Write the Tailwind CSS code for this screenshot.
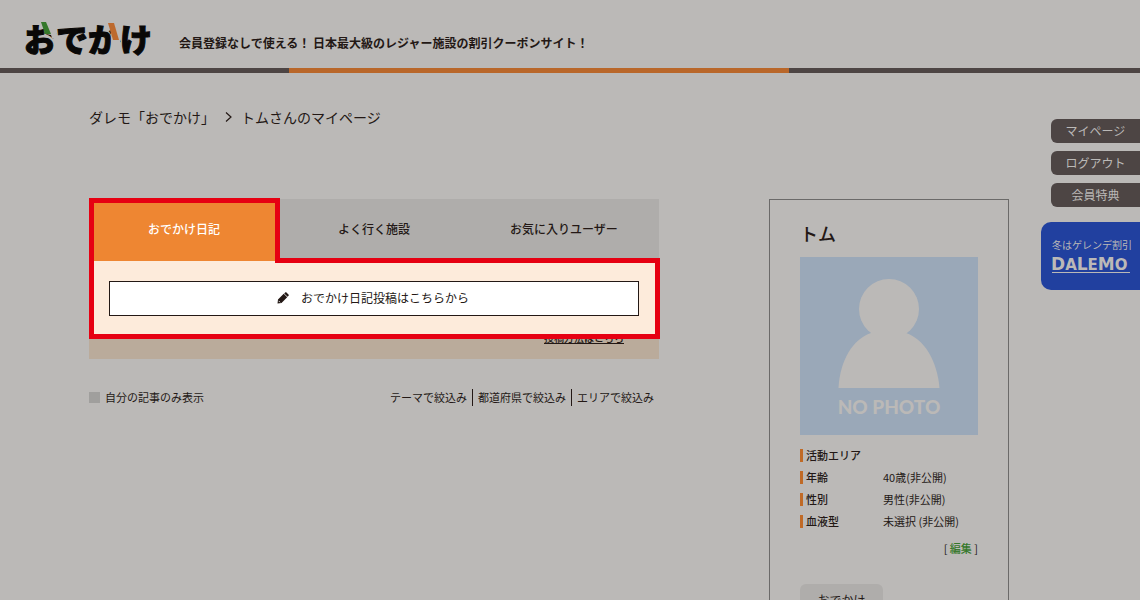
<!DOCTYPE html>
<html lang="ja">
<head>
<meta charset="utf-8">
<meta name="viewport" content="width=device-width, initial-scale=1">
<title>トムさんのマイページ | おでかけ</title>
<script src="https://cdn.jsdelivr.net/npm/@tailwindcss/browser@4"></script>
</head>
<body class="relative h-screen overflow-hidden bg-[#bbb9b7] font-['Noto_Sans_CJK_JP',sans-serif] text-[#231815]">
<header>
  <div class="flex h-[68px] items-start pl-[24px]">
    <a href="#" class="relative mt-[19px] block w-[128px] whitespace-nowrap text-[32px] leading-[38px] font-black text-[#090807] [-webkit-text-stroke:1px_#090807]">おでかけ
      <svg class="absolute top-0 left-0" width="128" height="38" viewBox="0 0 128 38" aria-hidden="true">
        <path d="M21 3h11v16h-4l-1-3-5-1z" fill="#bbb9b7"/>
        <path d="M17 3h5l5 12h-6z" fill="#35782a"/>
        <path d="M86 3h10v24h-8z" fill="#bbb9b7"/>
        <path d="M84 4h6l5 17h-6z" fill="#bd6a2e"/>
      </svg>
    </a>
    <p class="mt-[34px] ml-[27px] text-[12px] leading-[18px] font-bold">会員登録なしで使える！ 日本最大級のレジャー施設の割引クーポンサイト！</p>
  </div>
  <div class="flex h-[5px] bg-[#4d4544]">
    <div class="ml-[289px] w-[500px] bg-[#b9672a]"></div>
  </div>
</header>

<nav aria-label="パンくず" class="mt-[34px] ml-[89px] flex items-center text-[14px] leading-[20px]">
  <a href="#">ダレモ「おでかけ」</a>
  <svg class="mr-[8px] ml-[9px]" width="9" height="12" viewBox="0 0 9 12" fill="none" stroke="#231815" stroke-width="1.2" aria-hidden="true"><path d="M2 1.5l5 4.5-5 4.5"/></svg>
  <span>トムさんのマイページ</span>
</nav>

<main class="mt-[72px] ml-[89px] flex max-w-[920px] items-start gap-[110px]">
  <div class="flex-1">
    <section class="relative">
      <div class="grid grid-cols-3 bg-[#afadab] text-[12px] font-medium">
        <button class="h-[62px] bg-[#ee8632] pb-[2px] text-white">おでかけ日記</button>
        <button class="h-[62px] pb-[2px]">よく行く施設</button>
        <button class="h-[62px] pb-[2px]">お気に入りユーザー</button>
      </div>
      <div class="bg-[#baab9b]">
        <div class="relative z-10 h-[78px] bg-[#fdebdb] px-[20px] pt-[20px]">
          <button class="flex h-[35px] w-full items-center justify-center gap-[12px] border border-[#231815] bg-white pr-[2px] pb-[2px] text-[12px]">
            <svg width="12" height="12" viewBox="0 0 12 12" aria-hidden="true"><path d="M.5 11.5l.5-4L6.700 1.800l3.500 3.500-5.700 5.700z M7.200 1.400l1.200-1.100q.4-.3.800 0l2.500 2.500q.3.400 0 .8l-1.100 1.200z" fill="#231815"/><path d="M1.700 8.900l1.400 1.400" stroke="#fff" stroke-width=".8"/></svg>
            <span>おでかけ日記投稿はこちらから</span>
          </button>
        </div>
        <div class="flex h-[20px] justify-end pr-[35px] text-[10px] leading-[20px]">
          <a href="#" class="-mt-[11px] font-medium underline">投稿方法はこちら</a>
        </div>
      </div>
      <svg class="absolute -top-px left-0 z-20" width="571" height="141" viewBox="0 0 571 141" fill="none" stroke="#e60012" stroke-width="5" aria-hidden="true"><path d="M2.500 2.500h186v60h380v76h-566z"/></svg>
    </section>
    <div class="mt-[30px] flex items-center justify-between pr-[5px] text-[11px] leading-[17px]">
      <label class="flex items-center gap-[5px]"><input type="checkbox" class="size-[11px] appearance-none bg-[#a09f9d]">自分の記事のみ表示</label>
      <div class="flex">
        <a href="#" class="pr-[5px]">テーマで絞込み</a>
        <a href="#" class="border-l border-[#231815] px-[5px]">都道府県で絞込み</a>
        <a href="#" class="border-l border-[#231815] pl-[5px]">エリアで絞込み</a>
      </div>
    </div>
  </div>

  <aside class="w-[240px] border border-[#6b6a69] px-[30px] pt-[19px] pb-[40px]">
    <h1 class="text-[18px] leading-[28px] font-medium">トム</h1>
    <svg class="mt-[10px] block" width="178" height="178" viewBox="0 0 178 178" role="img" aria-label="NO PHOTO">
      <rect width="178" height="178" fill="#9aa8b8"/>
      <circle cx="89" cy="52" r="30" fill="#bbb9b7"/>
      <path d="M38.500 131C40 103 53 82 71 76h35c18 6 31 27 33.500 55z" fill="#bbb9b7"/>
      <text x="89" y="157" text-anchor="middle" font-family="Lato, sans-serif" font-weight="900" font-size="19" fill="#bbb9b7">NO PHOTO</text>
    </svg>
    <dl class="mt-[9px] grid grid-cols-[83px_1fr] text-[11px] leading-[22px]">
      <dt class="flex items-center gap-[3px] font-medium"><span class="h-[13px] w-[3px] bg-[#c06a26]"></span>活動エリア</dt><dd></dd>
      <dt class="flex items-center gap-[3px] font-medium"><span class="h-[13px] w-[3px] bg-[#c06a26]"></span>年齢</dt><dd>40歳(非公開)</dd>
      <dt class="flex items-center gap-[3px] font-medium"><span class="h-[13px] w-[3px] bg-[#c06a26]"></span>性別</dt><dd>男性(非公開)</dd>
      <dt class="flex items-center gap-[3px] font-medium"><span class="h-[13px] w-[3px] bg-[#c06a26]"></span>血液型</dt><dd>未選択 (非公開)</dd>
    </dl>
    <p class="mt-[6px] text-right text-[11px] leading-[20px]">[ <a href="#" class="font-medium text-[#35782a]">編集</a> ]</p>
    <button class="mt-[26px] h-[32px] w-[83px] rounded-t-[6px] bg-[#afadab] text-[12px]">おでかけ</button>
  </aside>
</main>

<nav aria-label="会員メニュー" class="absolute top-[119px] right-0 flex flex-col items-end gap-[8px] text-[12px] text-[#bbb9b7]">
  <a href="#" class="w-[89px] rounded-l-[6px] bg-[#4d4544] text-center leading-[24px]">マイページ</a>
  <a href="#" class="w-[89px] rounded-l-[6px] bg-[#4d4544] text-center leading-[24px]">ログアウト</a>
  <a href="#" class="w-[89px] rounded-l-[6px] bg-[#4d4544] text-center leading-[24px]">会員特典</a>
  <a href="#" class="mt-[7px] h-[68px] w-[99px] rounded-l-[10px] bg-[#21409f] pt-[15px] pl-[11px] text-[10px] leading-[16px] whitespace-nowrap">冬はゲレンデ割引
    <svg class="mt-[2px] block overflow-visible" width="80" height="20" viewBox="0 0 80 20" role="img" aria-label="DALEMO">
      <text x="-1" y="15" font-family="DejaVu Sans, sans-serif" font-weight="700" fill="#bbb9b7" font-size="17">D<tspan font-size="15">A</tspan><tspan font-size="17">L</tspan><tspan font-size="15">E</tspan><tspan font-size="17">M</tspan><tspan font-size="15">O</tspan></text>
      <path d="M0 17.500h78" stroke="#bbb9b7"/>
    </svg>
  </a>
</nav>
</body>
</html>
